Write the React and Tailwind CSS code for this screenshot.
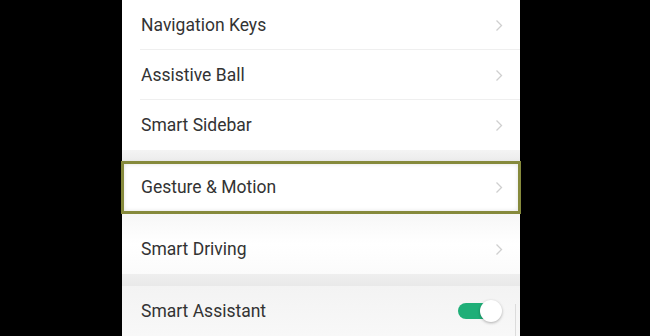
import React from "react";

function Chevron() {
  return (
    <svg width="8" height="13" viewBox="0 0 8 13" className="mr-[17px]">
      <path d="M1.5 1.5 L6.5 6.5 L1.5 11.5" fill="none" stroke="#cfcfcf" strokeWidth="1.3" />
    </svg>
  );
}

function Row({ label, sep }) {
  return (
    <div className="relative flex h-[50px] items-center justify-between bg-white pl-[19px]">
      <span className="text-[17.5px] text-[#333]">{label}</span>
      <Chevron />
      {sep && <div className="absolute bottom-0 left-[18px] right-0 h-px bg-[#efefef]" />}
    </div>
  );
}

export default function App() {
  return (
    <div className="h-[336px] w-[650px] overflow-hidden bg-black" style={{ fontFamily: "Roboto, 'Noto Sans', sans-serif" }}>
      <div className="ml-[122px] flex h-full w-[398px] flex-col bg-white">
        <div className="h-px bg-[#f2f2f2]" />
        <div className="-mt-px">
          <Row label="Navigation Keys" sep />
          <Row label="Assistive Ball" sep />
          <Row label="Smart Sidebar" />
        </div>
        <div className="h-[11px] bg-gradient-to-b from-[#f4f4f4] to-[#ececec]" />
        <div className="-mx-px flex h-[53px] items-center justify-between border-[3px] border-[#868a3c] bg-white pl-[17px] shadow-[inset_0_0_4px_rgba(0,0,0,0.12),0_2px_4px_rgba(0,0,0,0.15)]">
          <span className="text-[17.5px] text-[#333]">Gesture &amp; Motion</span>
          <div className="-mr-[2px]"><Chevron /></div>
        </div>
        <div className="flex h-[60px] items-center justify-between bg-gradient-to-b from-[#f7f7f7] via-white to-[#fbfbfb] pl-[19px] pt-[11px]">
          <span className="text-[17.5px] text-[#333]">Smart Driving</span>
          <Chevron />
        </div>
        <div className="h-[12px] bg-gradient-to-b from-[#efefef] to-[#e9e9e9]" />
        <div className="relative flex h-[50px] items-center justify-between bg-gradient-to-b from-[#f3f3f3] to-[#f8f8f8] pl-[19px]">
          <span className="text-[17.5px] text-[#333]">Smart Assistant</span>
          <div className="relative mr-[18px] flex h-[22px] w-[44px] items-center">
            <div className="h-[16px] w-[36px] rounded-full bg-[#1faf78]" />
            <div className="absolute right-0 top-0 h-[22px] w-[22px] rounded-full bg-white shadow-[0_1px_3px_rgba(0,0,0,0.3)]" />
          </div>
          <div className="absolute bottom-0 right-[4px] top-[18px] w-px bg-[#dcdcdc]" />
        </div>
      </div>
    </div>
  );
}
